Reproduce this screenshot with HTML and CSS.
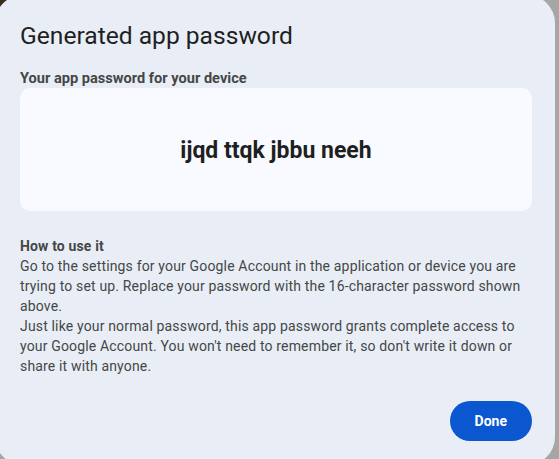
FILE: index.html
```html
<!DOCTYPE html>
<html lang="en">
<head>
<meta charset="utf-8">
<title>Generated app password</title>
<link rel="stylesheet" href="styles.css">
</head>
<body>
<div class="dialog" role="dialog" aria-labelledby="dlg-title">
  <h1 class="title" id="dlg-title">Generated app password</h1>
  <div class="label">Your app password for your device</div>
  <div class="pw-box"><span class="pw">ijqd ttqk jbbu neeh</span></div>
  <div class="howto">
    <div class="howto-title">How to use it</div>
    <div class="howto-text">Go to the settings for your Google Account in the application or device you are trying to set up. Replace your password with the 16-character password shown above.<br>Just like your normal password, this app password grants complete access to your Google Account. You won't need to remember it, so don't write it down or share it with anyone.</div>
  </div>
  <div class="actions"><button class="done">Done</button></div>
</div>
</body>
</html>
```
FILE: styles.css
```css
html, body {
  margin: 0;
  padding: 0;
}
body {
  width: 559px;
  height: 459px;
  overflow: hidden;
  background: linear-gradient(135deg, #3a2e22 0, #3a2e22 6px, #a6a6a6 6px);
  font-family: Roboto, "Noto Sans", Arial, sans-serif;
  color: #444746;
}
.dialog {
  box-sizing: border-box;
  width: 560px;
  height: 470px;
  margin: -5px 0 0 -5px;
  padding: 25px 23px 0 25px;
  background: #e9eef6;
  border-radius: 28px;
  display: flex;
  flex-direction: column;
}
.title {
  margin: 0;
  font-size: 24.6px;
  line-height: 32px;
  font-weight: 400;
  color: #1f1f1f;
}
.label {
  margin-top: 16px;
  font-size: 14.6px;
  line-height: 20px;
  font-weight: 700;
  color: #444746;
}
.pw-box {
  height: 123px;
  background: #f8faff;
  border-radius: 10px;
  display: flex;
  align-items: center;
  justify-content: center;
}
.pw {
  font-size: 23px;
  font-weight: 700;
  color: #1f1f1f;
  padding-top: 2px;
}
.howto {
  margin-top: 25px;
  font-size: 14px;
  line-height: 20px;
}
.howto-title {
  font-weight: 700;
  letter-spacing: 0.15px;
  color: #444746;
}
.howto-text {
  letter-spacing: 0.16px;
  color: #444746;
}
.actions {
  margin-top: 25px;
  display: flex;
  justify-content: flex-end;
}
.done {
  height: 40px;
  padding: 0 25px;
  border: none;
  border-radius: 20px;
  background: #0b57d0;
  color: #ffffff;
  font-family: Roboto, "Noto Sans", Arial, sans-serif;
  font-size: 14px;
  font-weight: 700;
}
```
